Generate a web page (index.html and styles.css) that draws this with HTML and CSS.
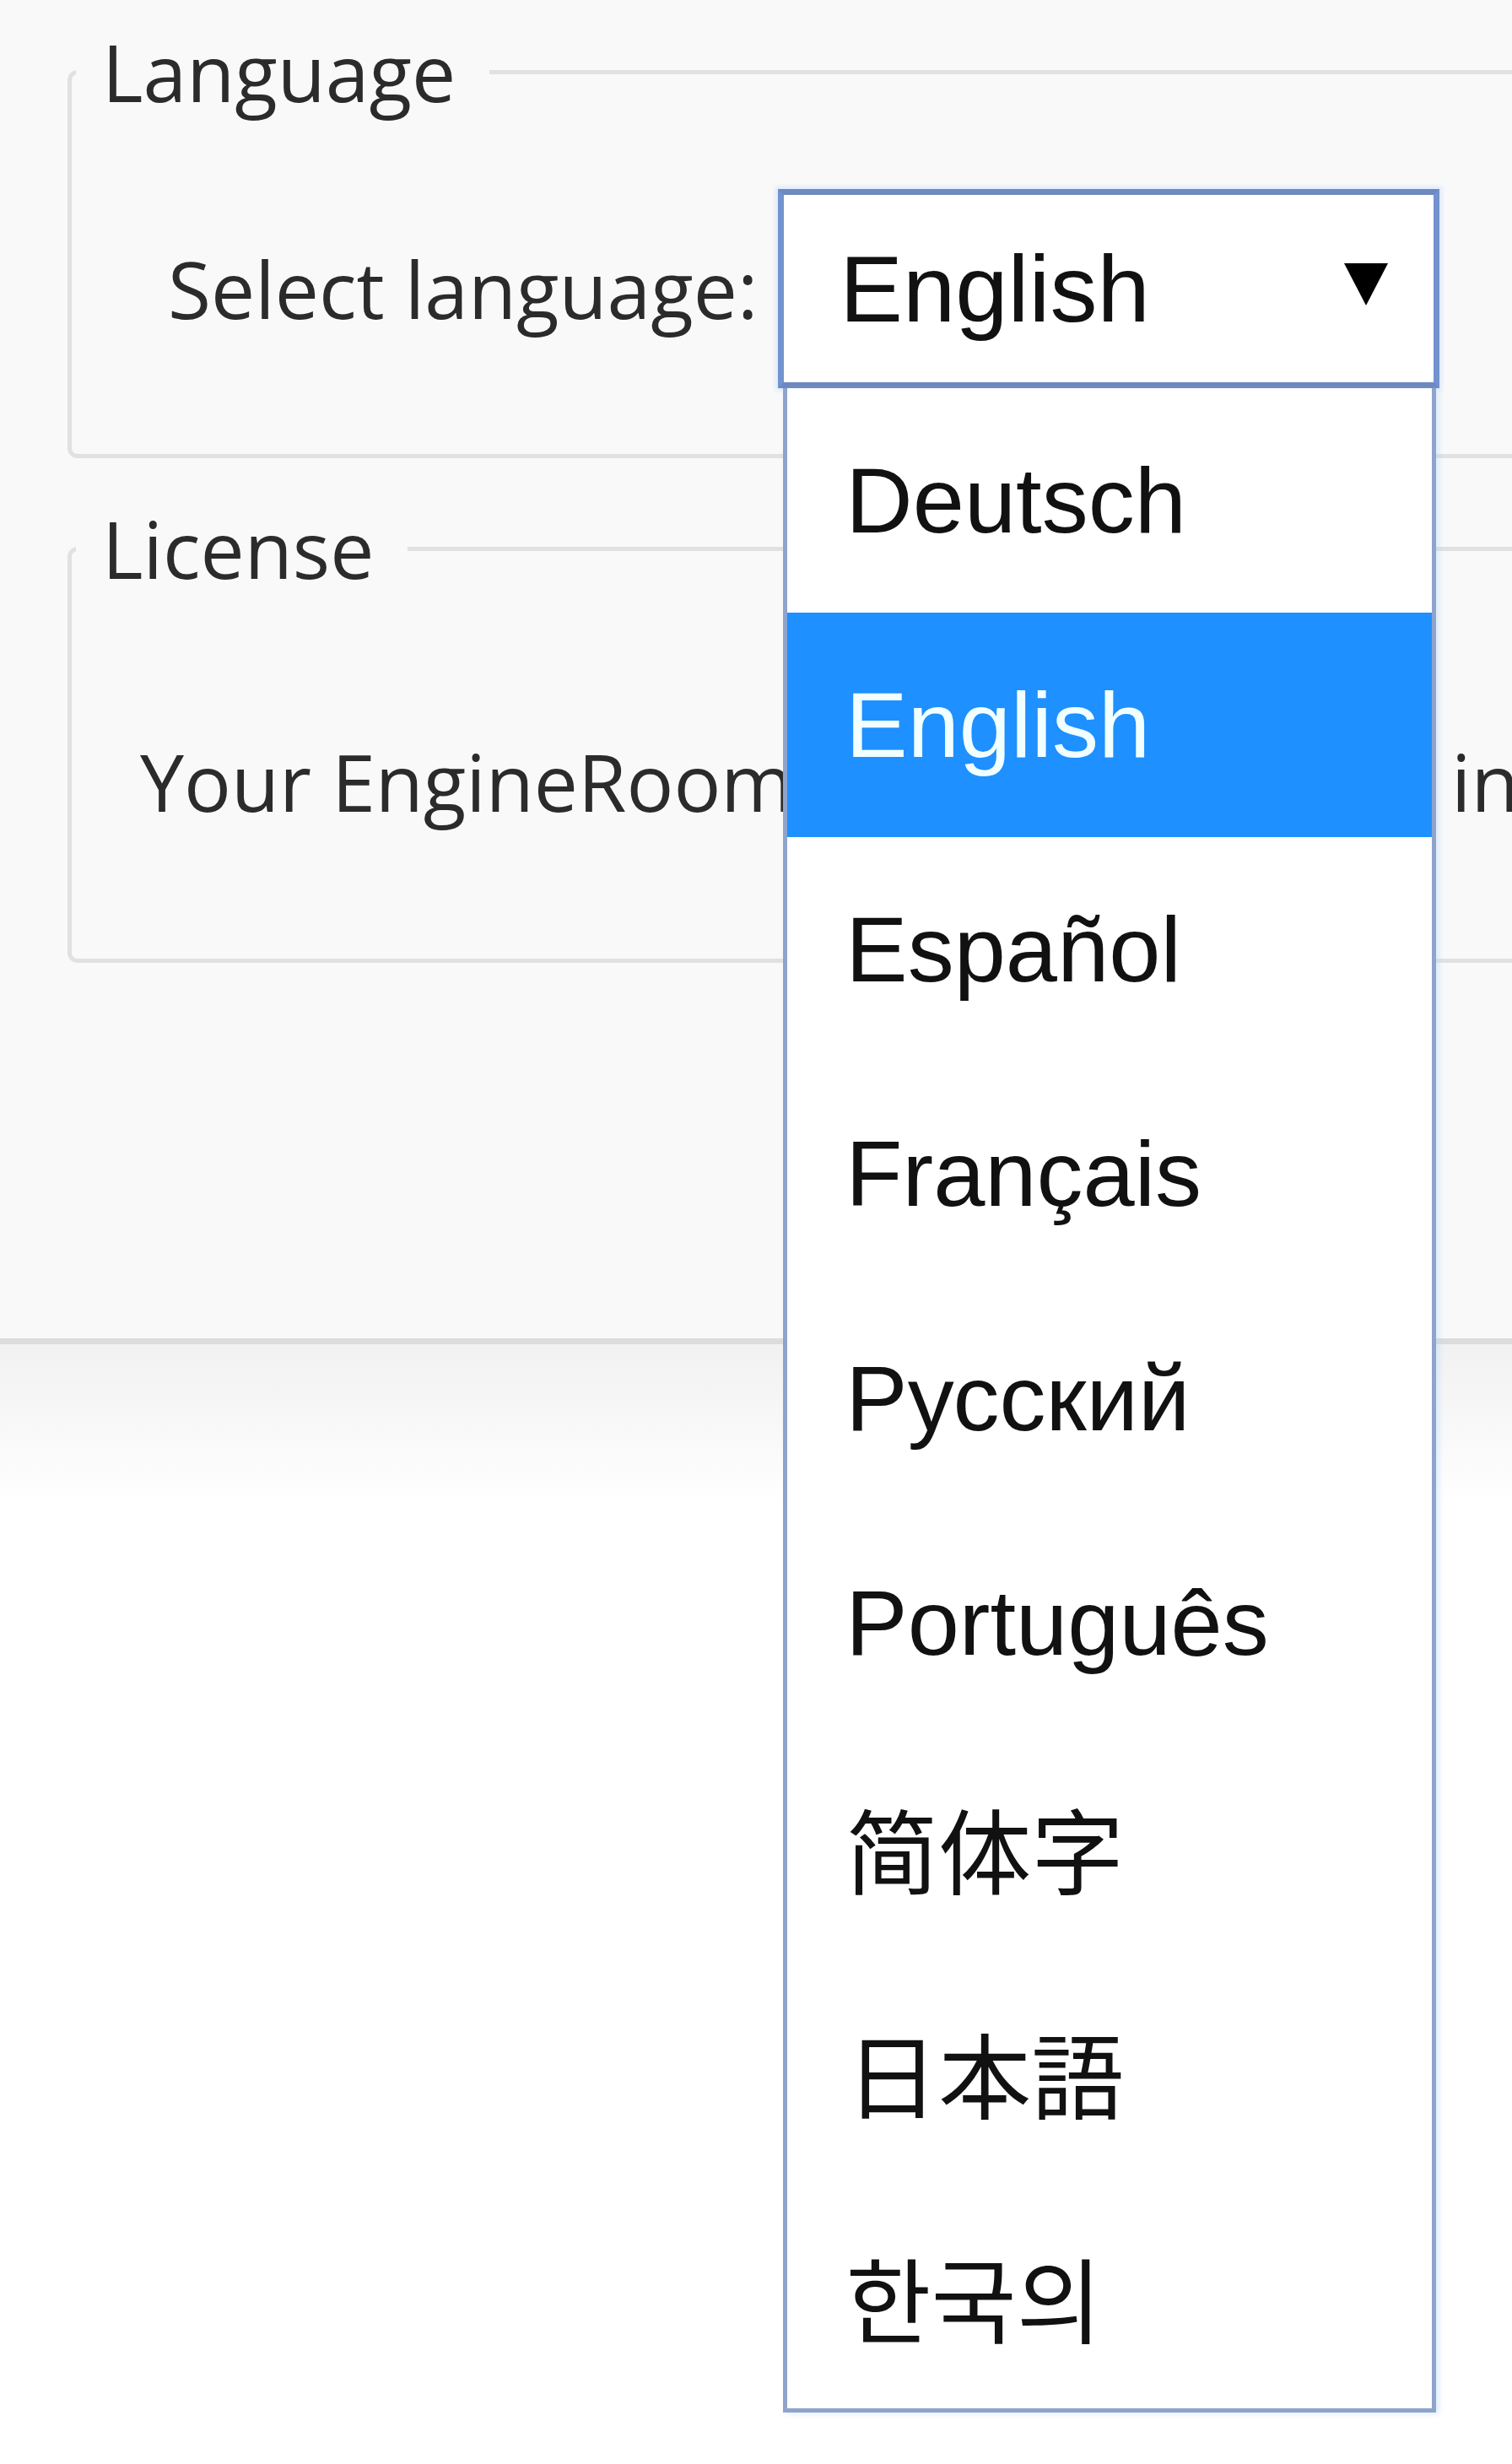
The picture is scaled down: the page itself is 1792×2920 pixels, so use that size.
FILE: index.html
```html
<!DOCTYPE html>
<html lang="en">
<head>
<meta charset="utf-8">
<title>Settings</title>
<link rel="stylesheet" href="styles.css">
</head>
<body>
  <div class="panel">
    <fieldset class="group group-language">
      <legend class="group-title">Language</legend>
      <div class="lang-row">
        <label class="field-label">Select language:</label>
        <div class="select">
          <div class="select-box">
            <span class="select-value">English</span>
            <svg class="select-arrow" viewBox="0 0 52 50" width="52" height="50" aria-hidden="true"><polygon points="0,0 52,0 26,50" fill="#000"/></svg>
          </div>
          <ul class="select-list">
            <li class="option">Deutsch</li>
            <li class="option is-selected">English</li>
            <li class="option">Español</li>
            <li class="option">Français</li>
            <li class="option">Русский</li>
            <li class="option">Português</li>
            <li class="option cjk-sc">简体字</li>
            <li class="option cjk-jp">日本語</li>
            <li class="option cjk-kr">한국의</li>
          </ul>
        </div>
      </div>
    </fieldset>
    <fieldset class="group group-license">
      <legend class="group-title">License</legend>
      <p class="license-text">Your EngineRoom license is located in this computer.</p>
    </fieldset>
  </div>
</body>
</html>
```
FILE: styles.css
```css
html {
  background: #ffffff;
}

body {
  margin: 0;
  min-height: 2920px;
  overflow-x: clip;
  font-family: "Open Sans", "Noto Sans", sans-serif;
  color: #2b2b2b;
}

.panel {
  position: relative;
  height: 1593px;
  box-sizing: border-box;
  padding-top: 35px;
  background: #f9f9f9;
  border-bottom: 7px solid #dcdcdc;
}

.panel::after {
  content: "";
  position: absolute;
  left: 0;
  right: 0;
  top: calc(100% + 7px);
  height: 190px;
  background: linear-gradient(#f1f1f1, #ffffff);
}

.group {
  margin: 0 -400px 0 80px;
  padding: 0;
  border: 5px solid #e1e1e1;
  border-radius: 12px;
  min-inline-size: 0;
}

.group-title {
  margin-left: 5px;
  padding: 0 40px 0 31px;
  font-size: 93px;
  line-height: 100px;
  color: #2b2b2b;
}

.lang-row {
  display: flex;
  align-items: center;
  gap: 24px;
  padding: 89px 0 78px 114px;
}

.field-label {
  font-size: 93px;
  line-height: 127px;
  color: #2b2b2b;
  white-space: nowrap;
}

.select {
  position: relative;
  z-index: 2;
  width: 784px;
}

.select-box {
  display: flex;
  align-items: center;
  justify-content: space-between;
  height: 236px;
  box-sizing: border-box;
  padding: 0 54px 0 66px;
  background: #ffffff;
  border: 7px solid #7393cf;
  border-top-color: #6d89bf;
  border-bottom-color: #6d89bf;
  box-shadow: 0 0 5px 3px rgba(170, 205, 255, 0.35);
}

.select-value {
  font-family: "Liberation Sans", Arial, sans-serif;
  font-size: 112px;
  color: #111111;
}

.select-arrow {
  display: block;
  margin-bottom: 10px;
}

.select-list {
  position: absolute;
  top: 100%;
  left: 6px;
  width: 774px;
  box-sizing: border-box;
  margin: 0;
  padding: 0;
  list-style: none;
  background: #ffffff;
  border: 5px solid #8ea4cc;
  border-top: none;
  box-shadow: 4px 2px 6px rgba(170, 205, 255, 0.35);
}

.option {
  height: 266px;
  line-height: 266px;
  padding-left: 69px;
  font-family: "Liberation Sans", Arial, sans-serif;
  font-size: 110px;
  color: #111111;
  white-space: nowrap;
}

.option.is-selected {
  background: #1e90ff;
  color: #f2ffff;
}

.cjk-sc {
  font-family: "Noto Sans CJK SC", sans-serif;
}

.cjk-jp {
  font-family: "Noto Sans CJK JP", sans-serif;
}

.cjk-kr {
  font-family: "Noto Sans CJK KR", sans-serif;
}

.group-license {
  margin-top: 57px;
}

.license-text {
  margin: 0;
  padding: 163px 0 146px 81px;
  font-size: 93px;
  line-height: 127px;
  color: #2b2b2b;
  white-space: nowrap;
}
```
